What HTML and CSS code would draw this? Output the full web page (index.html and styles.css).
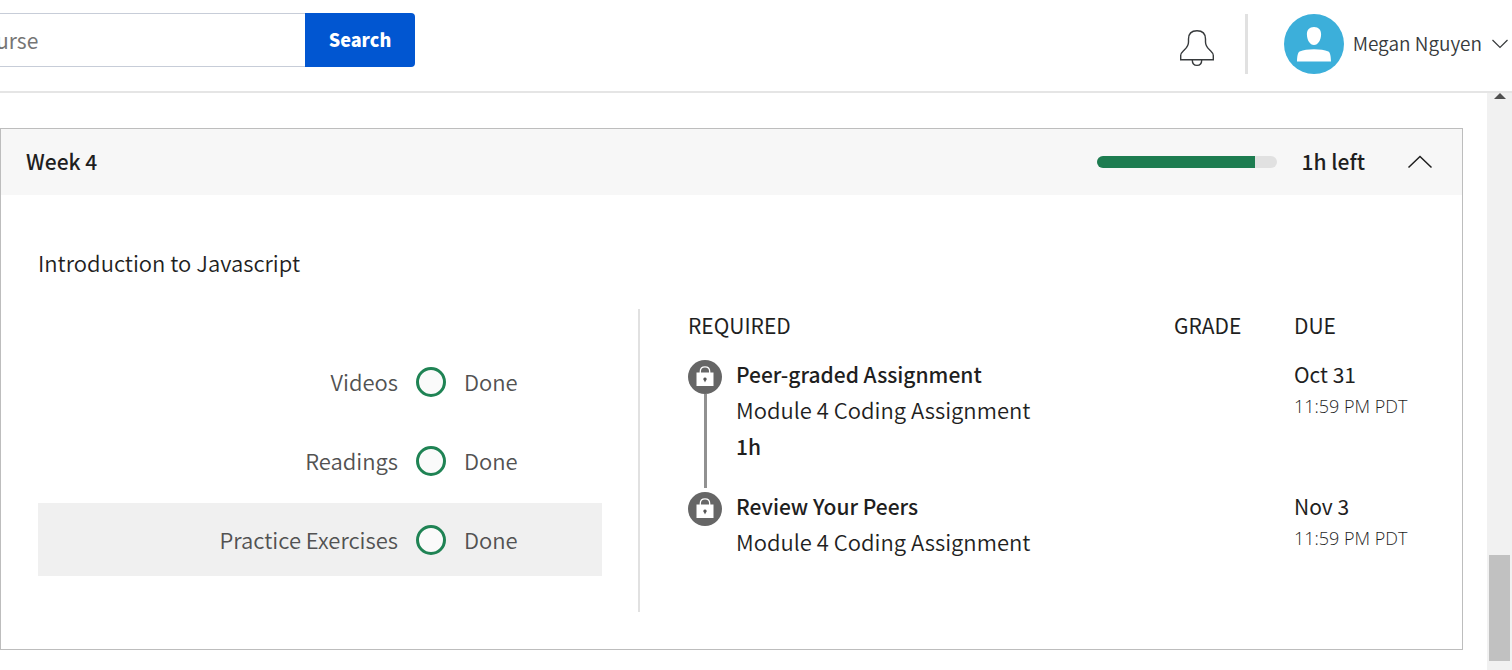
FILE: index.html
```html
<!DOCTYPE html>
<html lang="en">
<head>
<meta charset="utf-8">
<title>Week 4</title>
<link rel="stylesheet" href="styles.css">
</head>
<body>
<header class="topbar">
  <form class="search" role="search">
    <input class="search-input" type="search" placeholder="urse" aria-label="Search">
    <button class="search-button" type="submit">Search</button>
  </form>
  <div class="account">
    <button class="icon-button" type="button" aria-label="Notifications">
      <svg width="36" height="38" viewBox="0 0 36 38" fill="none" stroke="#373a3c" stroke-width="1.4">
        <path d="M1.700 30.700v-4.200c0-2.300 1.300-3.300 3.300-5.200 2.600-2.400 4.500-4 4.500-8.300V10C9.500 4.500 13 1.700 18 1.700s8.500 2.800 8.500 8.300v3c0 4.300 1.900 5.900 4.500 8.300 2 1.900 3.300 2.900 3.300 5.200v4.200Z"/>
        <path d="M13.300 31c0 3.300 1.800 5.400 4.700 5.400s4.700-2.100 4.700-5.400"/>
      </svg>
    </button>
    <span class="separator"></span>
    <button class="profile" type="button">
      <svg width="60" height="60" viewBox="0 0 60 60">
        <circle cx="30" cy="30" r="30" fill="#3cafda"/>
        <path fill="#fff" d="M30 13c4.600 0 7.100 3 7.100 7.200 0 5.600-3 10.800-7.100 10.800s-7.100-5.200-7.100-10.800C22.900 16 25.400 13 30 13ZM13 47.500c.2-5 .7-9.100 2.600-9.900C19.500 35.800 24 35.500 30 35.300c6 .2 10.500.5 14.400 2.300 1.900.8 2.400 4.900 2.600 9.900Z"/>
      </svg>
      <span class="profile-name">Megan Nguyen</span>
      <svg width="16" height="10" viewBox="0 0 16 10" fill="none" stroke="#373a3c" stroke-width="1.200"><path d="M.5 1 8 8.500 15.500 1"/></svg>
    </button>
  </div>
</header>
<div class="viewport">
  <main class="content">
    <section class="week">
      <div class="week-head">
        <h2 class="week-title">Week 4</h2>
        <div class="progress"><div class="progress-fill" style="width:88%"></div></div>
        <span class="time-left">1h left</span>
        <button class="icon-button" type="button" aria-label="Collapse">
          <svg width="26" height="14" viewBox="0 0 26 14" fill="none" stroke="#1f1f1f" stroke-width="1.500"><path d="M1.500 12.500 13 1.500l11.500 11"/></svg>
        </button>
      </div>
      <div class="week-body">
        <h3 class="module-title">Introduction to Javascript</h3>
        <div class="columns">
          <ul class="status-list">
            <li class="status"><span class="status-label">Videos</span><span class="ring"></span><span class="status-value">Done</span></li>
            <li class="status"><span class="status-label">Readings</span><span class="ring"></span><span class="status-value">Done</span></li>
            <li class="status status-active"><span class="status-label">Practice Exercises</span><span class="ring"></span><span class="status-value">Done</span></li>
          </ul>
          <div class="required">
            <table class="tasks">
              <thead>
                <tr><th>REQUIRED</th><th class="col-grade">GRADE</th><th class="col-due">DUE</th></tr>
              </thead>
              <tbody>
                <tr>
                  <td>
                    <div class="task task-linked">
                      <div class="track">
                        <svg width="34" height="34" viewBox="0 0 34 34">
                          <circle cx="17" cy="17" r="17" fill="#666"/>
                          <path d="M12.300 13.500v-2c0-2.700 1.700-4.600 4.700-4.600s4.700 1.900 4.700 4.600v2" fill="none" stroke="#fff" stroke-width="1.300"/>
                          <path d="M8.500 12.500h17v13.500h-17Z" fill="#fff"/>
                          <path d="M17 17.500a1.700 1.700 0 0 1 .8 3.200L17 22.500l-.8-1.800a1.700 1.700 0 0 1 .8-3.200Z" fill="#555"/>
                        </svg>
                        <span class="link-line"></span>
                      </div>
                      <div>
                        <div class="strong">Peer-graded Assignment</div>
                        <div class="light">Module 4 Coding Assignment</div>
                        <div class="strong">1h</div>
                      </div>
                    </div>
                  </td>
                  <td></td>
                  <td><div>Oct 31</div><div class="due-time">11:59 PM PDT</div></td>
                </tr>
                <tr>
                  <td>
                    <div class="task">
                      <div class="track">
                        <svg width="34" height="34" viewBox="0 0 34 34">
                          <circle cx="17" cy="17" r="17" fill="#666"/>
                          <path d="M12.300 13.500v-2c0-2.700 1.700-4.600 4.700-4.600s4.700 1.900 4.700 4.600v2" fill="none" stroke="#fff" stroke-width="1.300"/>
                          <path d="M8.500 12.500h17v13.500h-17Z" fill="#fff"/>
                          <path d="M17 17.500a1.700 1.700 0 0 1 .8 3.200L17 22.500l-.8-1.800a1.700 1.700 0 0 1 .8-3.200Z" fill="#555"/>
                        </svg>
                      </div>
                      <div>
                        <div class="strong">Review Your Peers</div>
                        <div class="light">Module 4 Coding Assignment</div>
                      </div>
                    </div>
                  </td>
                  <td></td>
                  <td><div>Nov 3</div><div class="due-time">11:59 PM PDT</div></td>
                </tr>
              </tbody>
            </table>
          </div>
        </div>
      </div>
    </section>
  </main>
  <div class="scrollbar" aria-hidden="true">
    <span class="scroll-arrow"></span>
    <span class="scroll-thumb"></span>
  </div>
</div>
</body>
</html>
```

FILE: styles.css
```css
* { box-sizing: border-box; }

body {
  margin: 0;
  min-height: 100vh;
  display: flex;
  flex-direction: column;
  overflow: hidden;
  background: #fff;
  color: #1f1f1f;
  font-family: "Noto Sans CJK SC", "Noto Sans", sans-serif;
  font-size: 21px;
  line-height: 36px;
}

button { font: inherit; color: inherit; border: 0; background: none; padding: 0; cursor: pointer; }
svg { display: block; flex: none; }
h2, h3 { margin: 0; font-size: inherit; }

.topbar {
  display: flex;
  justify-content: space-between;
  align-items: flex-start;
  padding: 13px 4px 17px 0;
  border-bottom: 2px solid #e5e5e5;
}

.search { display: flex; height: 54px; margin-left: -4px; }
.search-input {
  width: 309px;
  padding: 0;
  border: 1px solid #c7cdd8;
  border-width: 1px 0;
  border-radius: 0;
  outline: 0;
  font: inherit;
  line-height: 24px;
  appearance: none;
}
.search-input::placeholder { color: #757575; }
.search-button {
  width: 110px;
  padding-bottom: 2px;
  border-radius: 0 4px 4px 0;
  background: #0156d1;
  color: #fff;
  font-size: 18px;
  font-weight: 900;
}

.account { display: flex; align-items: center; padding-top: 1px; }
.icon-button { display: block; }
.account .icon-button { padding-top: 8px; }
.separator { width: 3px; height: 60px; margin: 0 36px 0 30px; background: #e1e1e1; }
.profile { display: flex; align-items: center; color: #373a3c; font-size: 19px; font-weight: 350; }
.profile-name { margin: 0 10px 0 9px; padding-bottom: 2px; }

.viewport { flex: 1; display: flex; }
.content { flex: 1; padding: 35px 24px 20px 0; }

.scrollbar {
  width: 25px;
  display: flex;
  flex-direction: column;
  justify-content: space-between;
  align-items: center;
  background: #f1f1f1;
  padding-bottom: 9px;
}
.scroll-arrow {
  border: 6px solid transparent;
  border-top: 0;
  border-bottom-color: #505050;
}
.scroll-thumb { width: 21px; height: 106px; background: #c1c1c1; }

.week { border: 1px solid #bdbdbd; }
.week-head {
  display: flex;
  align-items: center;
  height: 66px;
  padding: 0 29px 0 25px;
  background: #f7f7f7;
  font-weight: 500;
}
.week-title { flex: 1; padding-bottom: 2px; font-weight: 500; }
.progress { width: 180px; height: 12px; border-radius: 6px; overflow: hidden; background: #e1e1e1; }
.progress-fill { height: 100%; background: #1d7c50; }
.time-left { margin: 0 42px 0 25px; padding-bottom: 2px; }

.week-body { padding: 49px 37px 37px; }
.module-title { font-size: 22px; font-weight: 350; }
.columns { display: grid; grid-template-columns: 600px 1fr; margin-top: 29px; }

.status-list {
  list-style: none;
  margin: 0;
  padding: 36px 36px 36px 0;
  display: flex;
  flex-direction: column;
  gap: 6px;
  color: #525252;
}
.status {
  display: grid;
  grid-template-columns: 360px 30px 1fr;
  column-gap: 18px;
  align-items: center;
  height: 73px;
}
.status-active { background: #f0f0f0; }
.status-label { text-align: right; font-size: 22px; font-weight: 350; }
.status-value { font-size: 22px; font-weight: 350; }
.status-label, .status-value { padding-bottom: 2px; }
.ring { width: 30px; height: 30px; border: 3px solid #1f8354; border-radius: 50%; background: #fafafa; }

.required { border-left: 2px solid #e1e1e1; padding-left: 48px; }
.tasks { width: 100%; border-collapse: collapse; table-layout: fixed; }
.tasks th, .tasks td { padding: 0; text-align: left; vertical-align: top; font-weight: 400; }
.tasks th { padding-bottom: 15px; line-height: 32px; }
.col-grade { width: 120px; }
.col-due { width: 131px; }

.task { display: flex; gap: 14px; }
.task-linked > :last-child { padding-bottom: 24px; }
.track { display: flex; flex-direction: column; align-items: center; padding-top: 4px; }
.link-line { flex: 1; width: 3px; background: #919191; }
.strong { font-weight: 500; }
.light { padding-bottom: 2px; font-size: 22px; font-weight: 350; line-height: 34px; }
.due-time { font-family: "Open Sans", sans-serif; font-size: 18px; font-weight: 300; line-height: 28px; }
```
